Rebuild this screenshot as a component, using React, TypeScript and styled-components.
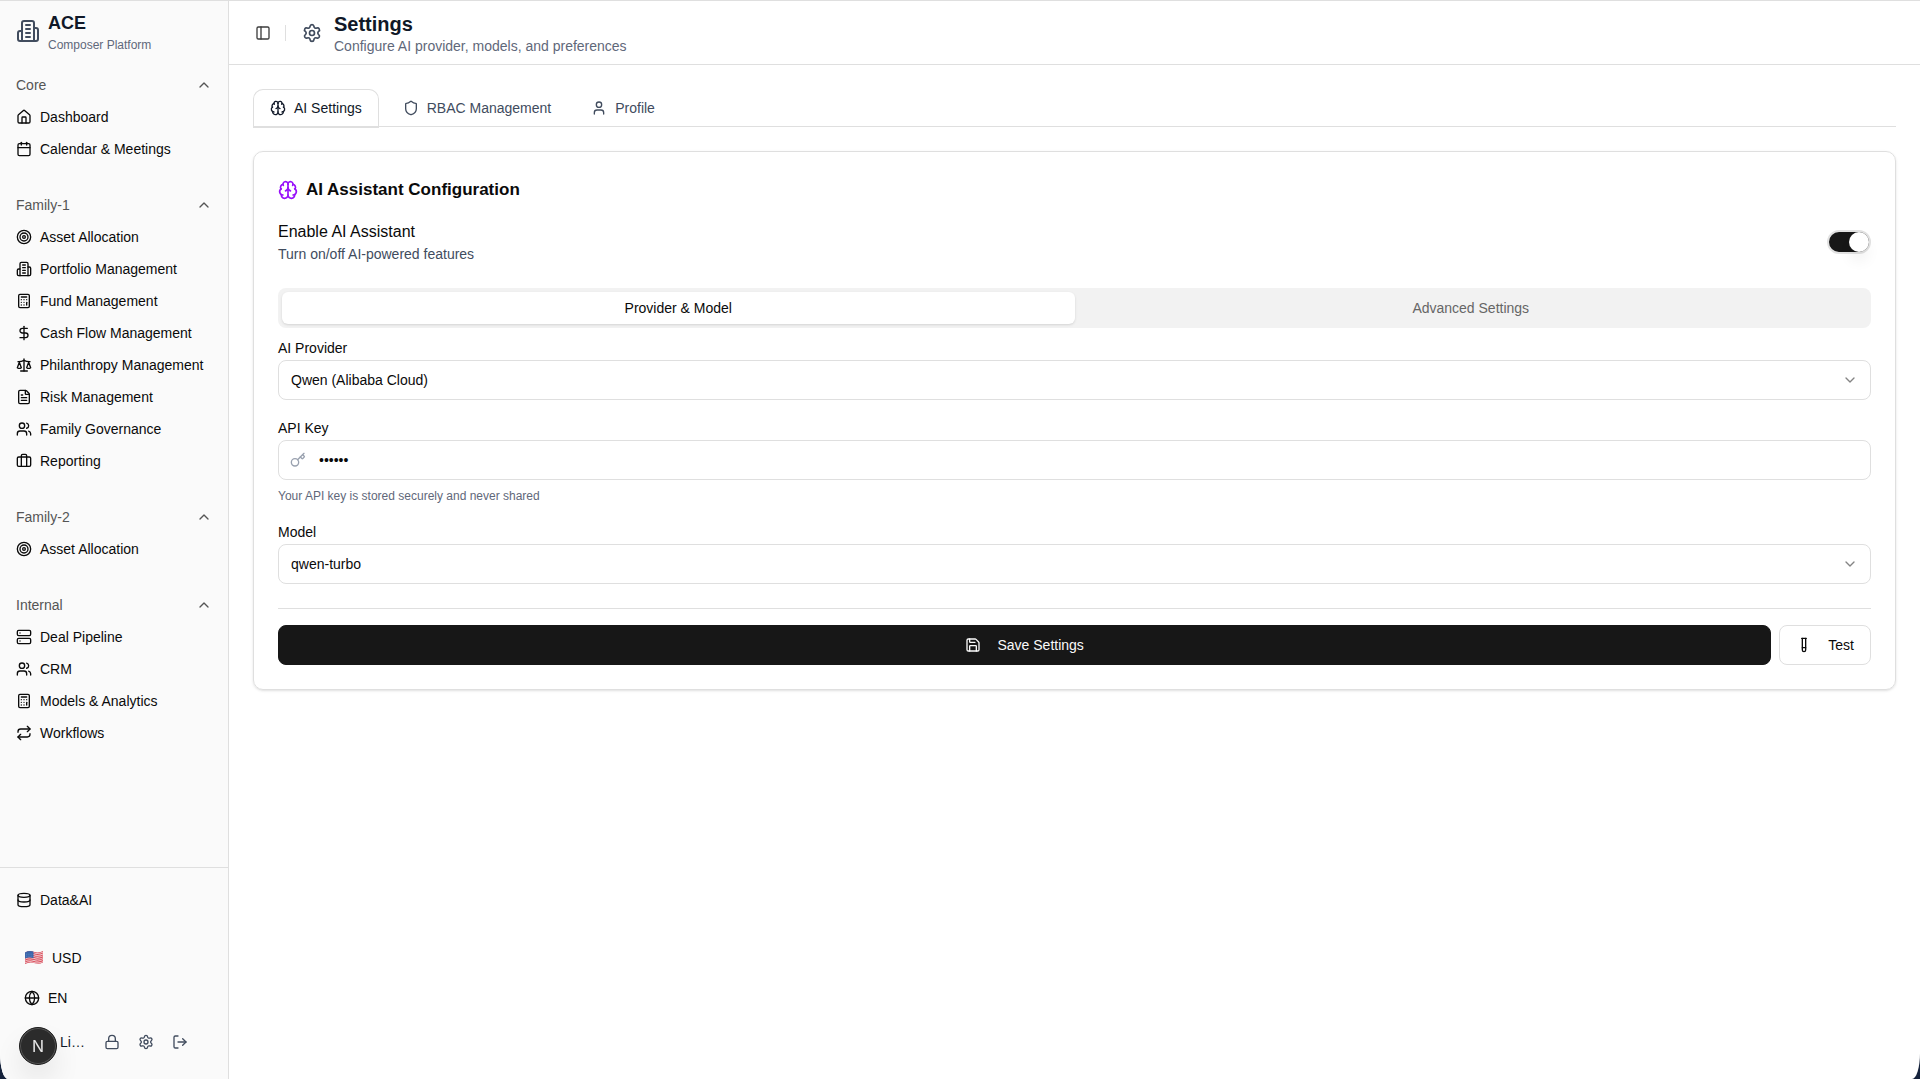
import React, { useState } from 'react';
import styled, { createGlobalStyle, css } from 'styled-components';
import {
  Brain, Briefcase, Calculator, Calendar, ChevronDown, ChevronUp, Database, DollarSign, FileText,
  Globe, House, Key, Lock, LogOut, PanelLeft, Repeat, Save, Scale, Server, Settings, Shield,
  Target, TestTube, User, Users,
} from 'lucide-react';

const color = {
  ink: '#0a0a0a',
  heading: '#101828',
  slate: '#414c5e',
  muted: '#5f687a',
  group: '#555555',
  line: '#dfdfdf',
  sidebar: '#fafafa',
  accent: '#9810fa',
  primary: '#171717',
  track: '#f2f2f2',
};

const GlobalStyle = createGlobalStyle`
  *, *::before, *::after { box-sizing: border-box; }
  body {
    margin: 0;
    background: #16233c;
    color: ${color.ink};
    font: 14px/20px "Liberation Sans", Arial, sans-serif;
  }
  button, input, select { font: inherit; color: inherit; margin: 0; }
  button { cursor: pointer; }
  svg { display: block; flex-shrink: 0; }
  h1, h2, p, ul { margin: 0; padding: 0; }
`;

const Shell = styled.div`
  display: grid;
  grid-template-columns: 229px minmax(0, 1fr);
  min-height: 100vh;
  background: #fff;
  border-top: 1px solid ${color.line};
  border-radius: 0 0 8px 8px / 0 0 26px 26px;
  overflow: hidden;
`;

const Sidebar = styled.aside`
  display: flex;
  flex-direction: column;
  background: ${color.sidebar};
  border-right: 1px solid ${color.line};
`;

const Brand = styled.div`
  display: flex;
  align-items: center;
  gap: 8px;
  height: 60px;
  padding: 0 16px;
  color: ${color.slate};
`;

const BrandText = styled.div`
  padding-top: 4px;
`;

const BrandName = styled.div`
  color: ${color.heading};
  font-size: 18px;
  font-weight: 700;
  line-height: 24px;
`;

const BrandNote = styled.div`
  color: ${color.muted};
  font-size: 12px;
  line-height: 20px;
`;

const Nav = styled.nav`
  display: flex;
  flex-direction: column;
  gap: 24px;
  padding: 8px 16px;
`;

const GroupToggle = styled.button`
  display: flex;
  align-items: center;
  justify-content: space-between;
  width: 100%;
  height: 32px;
  padding: 0;
  border: 0;
  background: none;
  color: ${color.group};
`;

const NavList = styled.ul`
  list-style: none;
`;

const NavLink = styled.a`
  display: flex;
  align-items: center;
  gap: 8px;
  height: 32px;
  color: ${color.ink};
  text-decoration: none;
  white-space: nowrap;
`;

const SidebarFooter = styled.div`
  margin-top: auto;
  padding: 16px 16px 17px;
  border-top: 1px solid ${color.line};
`;

const Preferences = styled.div`
  display: flex;
  flex-direction: column;
  gap: 8px;
  margin-top: 26px;
`;

const PreferenceButton = styled.button`
  display: flex;
  align-items: center;
  gap: 8px;
  height: 32px;
  padding: 0 8px;
  border: 0;
  background: none;
`;

const UserRow = styled.div`
  display: flex;
  align-items: center;
  height: 40px;
  padding-left: 44px;
  color: ${color.slate};
`;

const UserName = styled.span`
  width: 35px;
  color: ${color.heading};
`;

const IconButton = styled.button`
  display: flex;
  align-items: center;
  justify-content: center;
  width: 34px;
  height: 32px;
  padding: 0;
  border: 0;
  background: none;
`;

const DevBadge = styled.button`
  position: fixed;
  left: 19px;
  bottom: 14px;
  width: 38px;
  height: 38px;
  padding: 0;
  border: 1px solid #1c1c1c;
  border-radius: 50%;
  background: #2b2b2b;
  box-shadow: inset 0 0 0 1px #555, 0 16px 32px -8px rgba(0, 0, 0, 0.24);
  color: #e6e6e6;
  font: 400 16px/36px Inter, "Liberation Sans", sans-serif;
`;

const Main = styled.main`
  min-width: 0;
`;

const Header = styled.header`
  display: flex;
  align-items: center;
  height: 64px;
  padding: 0 17px;
  border-bottom: 1px solid ${color.line};
  color: ${color.slate};
`;

const PanelButton = styled(IconButton)`
  color: #3d3d3d;
`;

const Separator = styled.span`
  width: 1px;
  height: 16px;
  margin: 0 16px 0 5px;
  background: ${color.line};
`;

const HeaderText = styled.div`
  margin-left: 12px;
  padding-top: 2px;
`;

const PageTitle = styled.h1`
  color: ${color.heading};
  font-size: 20px;
  line-height: 24px;
`;

const PageNote = styled.p`
  color: ${color.muted};
`;

const Content = styled.div`
  padding: 24px;
`;

const TabBar = styled.div`
  display: flex;
  gap: 8px;
  height: 38px;
  border-bottom: 1px solid ${color.line};
`;

const Tab = styled.button<{ $active?: boolean }>`
  display: flex;
  align-items: center;
  gap: 8px;
  height: 38px;
  padding: 0 16px;
  border: 0;
  background: none;
  color: ${color.slate};
  ${({ $active }) => $active && css`
    height: 39px;
    border: 1px solid ${color.line};
    border-bottom-width: 2px;
    border-radius: 10px 10px 0 0;
    background: #fff;
    color: ${color.heading};
  `}
`;

const Card = styled.section`
  margin-top: 24px;
  padding: 24px;
  border: 1px solid ${color.line};
  border-radius: 10px;
  box-shadow: 0 1px 3px rgba(0, 0, 0, 0.1), 0 1px 2px -1px rgba(0, 0, 0, 0.1);
`;

const CardTitle = styled.h2`
  display: flex;
  align-items: center;
  gap: 8px;
  font-size: 17px;
  line-height: 28px;
  svg { color: ${color.accent}; }
`;

const ToggleRow = styled.div`
  display: flex;
  align-items: center;
  justify-content: space-between;
  margin: 16px 0 24px;
`;

const ToggleLabel = styled.label`
  display: block;
  font-size: 16px;
  line-height: 24px;
`;

const ToggleNote = styled.p`
  color: ${color.slate};
`;

const Switch = styled.input`
  appearance: none;
  display: flex;
  width: 44px;
  height: 24px;
  border: 2px solid #e2e2e2;
  border-radius: 12px;
  background: #c9c9c9;
  cursor: pointer;
  &::before {
    content: '';
    width: 20px;
    height: 20px;
    border-radius: 50%;
    background: #fff;
    box-shadow: 0 10px 15px -3px rgba(0, 0, 0, 0.1);
  }
  &:checked {
    justify-content: flex-end;
    background: ${color.primary};
  }
`;

const Segments = styled.div`
  display: grid;
  grid-template-columns: 1fr 1fr;
  height: 40px;
  padding: 4px;
  border-radius: 8px;
  background: ${color.track};
`;

const Segment = styled.button<{ $active?: boolean }>`
  padding: 0;
  border: 0;
  border-radius: 6px;
  background: none;
  color: #666;
  ${({ $active }) => $active && css`
    background: #fff;
    color: ${color.ink};
    box-shadow: 0 1px 3px rgba(0, 0, 0, 0.1), 0 1px 2px -1px rgba(0, 0, 0, 0.1);
  `}
`;

const Fields = styled.div`
  display: flex;
  flex-direction: column;
  gap: 16px;
  padding: 8px 0 24px;
`;

const FieldLabel = styled.label`
  display: block;
  line-height: 24px;
`;

/* Stacks the control and its icon in one grid cell. */
const Control = styled.div<{ $iconSide: 'start' | 'end' }>`
  display: grid;
  align-items: center;
  > * { grid-area: 1 / 1; }
  > svg {
    justify-self: ${({ $iconSide }) => $iconSide};
    margin: 0 13px 0 12px;
    pointer-events: none;
    color: ${({ $iconSide }) => ($iconSide === 'end' ? '#848484' : '#99a1af')};
  }
`;

const controlStyle = css`
  appearance: none;
  width: 100%;
  height: 40px;
  border: 1px solid ${color.line};
  border-radius: 8px;
  background: #fff;
`;

const Select = styled.select`
  ${controlStyle}
  padding: 0 40px 0 12px;
`;

const TextInput = styled.input`
  ${controlStyle}
  padding: 0 12px 0 40px;
`;

const Help = styled.p`
  margin-top: 8px;
  color: ${color.muted};
  font-size: 12px;
  line-height: 16px;
`;

const Actions = styled.div`
  display: flex;
  gap: 8px;
  padding-top: 16px;
  border-top: 1px solid ${color.line};
`;

const Button = styled.button<{ $primary?: boolean }>`
  display: flex;
  align-items: center;
  justify-content: center;
  gap: 16px;
  height: 40px;
  padding: 0 16px;
  border: 1px solid ${color.line};
  border-radius: 8px;
  background: #fff;
  ${({ $primary }) => $primary && css`
    flex: 1;
    border-color: ${color.primary};
    background: ${color.primary};
    color: #fafafa;
  `}
`;

function Building({ size = 16 }: { size?: number }) {
  return (
    <svg width={size} height={size} viewBox="0 0 24 24" fill="none" stroke="currentColor"
      strokeWidth="2" strokeLinecap="round" strokeLinejoin="round" aria-hidden="true">
      <path d="M6 22V4a2 2 0 0 1 2-2h8a2 2 0 0 1 2 2v18Z" />
      <path d="M6 12H4a2 2 0 0 0-2 2v6a2 2 0 0 0 2 2h2" />
      <path d="M18 9h2a2 2 0 0 1 2 2v9a2 2 0 0 1-2 2h-2" />
      <path d="M10 6h4M10 10h4M10 14h4M10 18h4" />
    </svg>
  );
}

function UsFlag() {
  const wave = 'M1 2.5C4 .8 7 .8 10 1.8S16 2.6 19 1V12.5C16 14 13 14 10 13S4 12.4 1 14Z';
  return (
    <svg width="20" height="16" viewBox="0 0 20 16" aria-hidden="true">
      <clipPath id="flag-cloth"><path d={wave} /></clipPath>
      <g clipPath="url(#flag-cloth)">
        <rect width="20" height="16" fill="#f1dfe1" />
        {[0, 1, 2, 3, 4, 5, 6].map((i) => (
          <path key={i} d={`M1 ${2.6 + i * 1.9}c3-1.7 6-1.7 9-.7s6 .8 9-.8`}
            fill="none" stroke="#dc4f5d" strokeWidth="1.1" />
        ))}
        <path d="M0 0h9.5v8.2C6 7.2 4 7.4 0 9Z" fill="#3a66ab" />
        <path d="M2 4.2h7M2 6.2h7" stroke="#7f9dcb" strokeWidth=".6" strokeDasharray=".8 1" />
      </g>
    </svg>
  );
}

type Icon = React.ComponentType<{ size?: number }>;
const groups: { title: string; items: [string, Icon][] }[] = [
  { title: 'Core', items: [['Dashboard', House], ['Calendar & Meetings', Calendar]] },
  {
    title: 'Family-1',
    items: [
      ['Asset Allocation', Target], ['Portfolio Management', Building], ['Fund Management', Calculator],
      ['Cash Flow Management', DollarSign], ['Philanthropy Management', Scale],
      ['Risk Management', FileText], ['Family Governance', Users], ['Reporting', Briefcase],
    ],
  },
  { title: 'Family-2', items: [['Asset Allocation', Target]] },
  {
    title: 'Internal',
    items: [
      ['Deal Pipeline', Server], ['CRM', Users], ['Models & Analytics', Calculator], ['Workflows', Repeat],
    ],
  },
];

function NavGroup({ title, items }: { title: string; items: [string, Icon][] }) {
  const [open, setOpen] = useState(true);
  return (
    <div>
      <GroupToggle aria-expanded={open} onClick={() => setOpen(!open)}>
        {title}
        {open ? <ChevronUp size={16} /> : <ChevronDown size={16} />}
      </GroupToggle>
      {open && (
        <NavList>
          {items.map(([label, ItemIcon]) => (
            <li key={label}><NavLink href="#"><ItemIcon size={16} />{label}</NavLink></li>
          ))}
        </NavList>
      )}
    </div>
  );
}

export default function App() {
  const [enabled, setEnabled] = useState(true);
  const [apiKey, setApiKey] = useState('secret');
  return (
    <>
      <GlobalStyle />
      <Shell>
        <Sidebar>
          <Brand>
            <Building size={24} />
            <BrandText>
              <BrandName>ACE</BrandName>
              <BrandNote>Composer Platform</BrandNote>
            </BrandText>
          </Brand>
          <Nav>
            {groups.map((group) => <NavGroup key={group.title} {...group} />)}
          </Nav>
          <SidebarFooter>
            <NavLink href="#"><Database size={16} />Data&amp;AI</NavLink>
            <Preferences>
              <PreferenceButton><UsFlag />USD</PreferenceButton>
              <PreferenceButton><Globe size={16} />EN</PreferenceButton>
              <UserRow>
                <UserName>Li…</UserName>
                <IconButton aria-label="Lock"><Lock size={16} /></IconButton>
                <IconButton aria-label="Settings"><Settings size={16} /></IconButton>
                <IconButton aria-label="Log out"><LogOut size={16} /></IconButton>
              </UserRow>
            </Preferences>
          </SidebarFooter>
        </Sidebar>
        <Main>
          <Header>
            <PanelButton aria-label="Toggle sidebar"><PanelLeft size={16} /></PanelButton>
            <Separator />
            <Settings size={20} />
            <HeaderText>
              <PageTitle>Settings</PageTitle>
              <PageNote>Configure AI provider, models, and preferences</PageNote>
            </HeaderText>
          </Header>
          <Content>
            <TabBar role="tablist">
              <Tab role="tab" aria-selected $active><Brain size={16} />AI Settings</Tab>
              <Tab role="tab"><Shield size={16} />RBAC Management</Tab>
              <Tab role="tab"><User size={16} />Profile</Tab>
            </TabBar>
            <Card>
              <CardTitle><Brain size={20} />AI Assistant Configuration</CardTitle>
              <ToggleRow>
                <div>
                  <ToggleLabel htmlFor="enable">Enable AI Assistant</ToggleLabel>
                  <ToggleNote>Turn on/off AI-powered features</ToggleNote>
                </div>
                <Switch id="enable" type="checkbox" role="switch" checked={enabled}
                  onChange={(e) => setEnabled(e.target.checked)} />
              </ToggleRow>
              <Segments role="tablist">
                <Segment role="tab" aria-selected $active>Provider &amp; Model</Segment>
                <Segment role="tab">Advanced Settings</Segment>
              </Segments>
              <Fields>
                <div>
                  <FieldLabel htmlFor="provider">AI Provider</FieldLabel>
                  <Control $iconSide="end">
                    <Select id="provider"><option>Qwen (Alibaba Cloud)</option></Select>
                    <ChevronDown size={16} />
                  </Control>
                </div>
                <div>
                  <FieldLabel htmlFor="api-key">API Key</FieldLabel>
                  <Control $iconSide="start">
                    <TextInput id="api-key" type="password" value={apiKey}
                      onChange={(e) => setApiKey(e.target.value)} />
                    <Key size={16} />
                  </Control>
                  <Help>Your API key is stored securely and never shared</Help>
                </div>
                <div>
                  <FieldLabel htmlFor="model">Model</FieldLabel>
                  <Control $iconSide="end">
                    <Select id="model"><option>qwen-turbo</option></Select>
                    <ChevronDown size={16} />
                  </Control>
                </div>
              </Fields>
              <Actions>
                <Button $primary><Save size={16} />Save Settings</Button>
                <Button><TestTube size={16} />Test</Button>
              </Actions>
            </Card>
          </Content>
        </Main>
      </Shell>
      <DevBadge aria-label="Open developer tools">N</DevBadge>
    </>
  );
}
